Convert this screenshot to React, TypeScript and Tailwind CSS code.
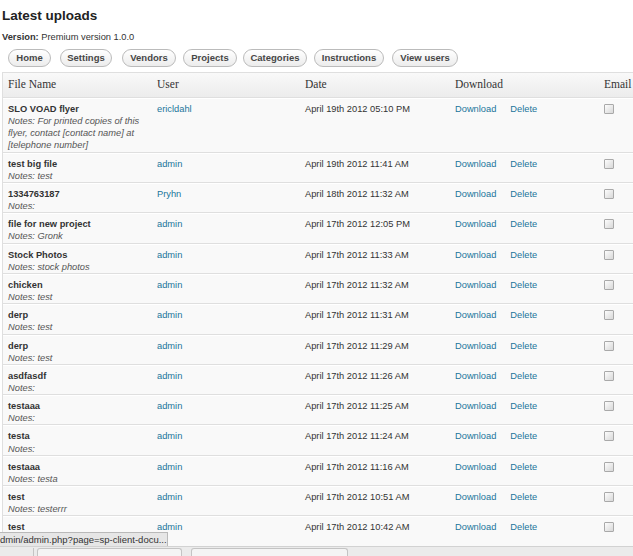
const navButtons = [
  { label: "Home", w: "w-[43px]", ml: "ml-[8px]" },
  { label: "Settings", w: "w-[52px]", ml: "ml-[9px]" },
  { label: "Vendors", w: "w-[54px]", ml: "ml-[10px]" },
  { label: "Projects", w: "w-[54px]", ml: "ml-[7px]" },
  { label: "Categories", w: "w-[64px]", ml: "ml-[6px]" },
  { label: "Instructions", w: "w-[70px]", ml: "ml-[7px]" },
  { label: "View users", w: "w-[66px]", ml: "ml-[8px]" },
]

const uploads = [
  { name: "SLO VOAD flyer", notes: "Notes: For printed copies of this flyer, contact [contact name] at [telephone number]", user: "ericldahl", date: "April 19th 2012 05:10 PM" },
  { name: "test big file", notes: "Notes: test", user: "admin", date: "April 19th 2012 11:41 AM" },
  { name: "1334763187", notes: "Notes:", user: "Pryhn", date: "April 18th 2012 11:32 AM" },
  { name: "file for new project", notes: "Notes: Gronk", user: "admin", date: "April 17th 2012 12:05 PM" },
  { name: "Stock Photos", notes: "Notes: stock photos", user: "admin", date: "April 17th 2012 11:33 AM" },
  { name: "chicken", notes: "Notes: test", user: "admin", date: "April 17th 2012 11:32 AM" },
  { name: "derp", notes: "Notes: test", user: "admin", date: "April 17th 2012 11:31 AM" },
  { name: "derp", notes: "Notes: test", user: "admin", date: "April 17th 2012 11:29 AM" },
  { name: "asdfasdf", notes: "Notes:", user: "admin", date: "April 17th 2012 11:26 AM" },
  { name: "testaaa", notes: "Notes:", user: "admin", date: "April 17th 2012 11:25 AM" },
  { name: "testa", notes: "Notes:", user: "admin", date: "April 17th 2012 11:24 AM" },
  { name: "testaaa", notes: "Notes: testa", user: "admin", date: "April 17th 2012 11:16 AM" },
  { name: "test", notes: "Notes: testerrr", user: "admin", date: "April 17th 2012 10:51 AM" },
  { name: "test", notes: "Notes: test", user: "admin", date: "April 17th 2012 10:42 AM" },
]

const cols = "grid grid-cols-[149px_148px_150px_149px_150px]"

export default function App() {
  return (
    <div className="relative w-[633px] h-[556px] overflow-hidden bg-white text-[#333] font-['Liberation_Sans',Arial,sans-serif]">
      <div className="pl-[2px] pt-[7px]">
        <h2 className="text-[13.5px] font-bold leading-[18px] text-[#222]">Latest uploads</h2>
        <p className="mt-[6px] text-[9.3px] leading-[12px]">
          <b>Version:</b> Premium version 1.0.0
        </p>
      </div>

      <div className="flex mt-[6px]">
        {navButtons.map((b) => (
          <button
            key={b.label}
            className={`${b.w} ${b.ml} h-[18px] rounded-full border border-[#bbb] bg-gradient-to-b from-white to-[#ececec] text-[9.5px] font-bold text-[#464646] leading-[16px] text-center`}
          >
            {b.label}
          </button>
        ))}
      </div>

      <div className="ml-[2px] mt-[5px] w-[750px] border border-[#dfdfdf] bg-[#f9f9f9]">
        <div className={`${cols} h-[25px] border-b border-[#dfdfdf] bg-gradient-to-b from-[#f9f9f9] to-[#ececec] font-['Liberation_Serif',Georgia,serif] text-[11.5px] text-[#333] items-center`}>
          <div className="px-[5px]">File Name</div>
          <div className="px-[5px]">User</div>
          <div className="px-[5px]">Date</div>
          <div className="px-[5px]">Download</div>
          <div className="px-[5px]">Email</div>
        </div>

        {uploads.map((u, i) => (
          <div key={i} className={`${cols} border-b border-[#dfdfdf] border-t border-t-white pt-[4px] text-[9.3px] leading-[12.15px]`}>
            <div className="px-[5px]">
              <div className="font-bold text-[#333]">{u.name}</div>
              <div className="italic text-[#555] pr-[4px]">{u.notes}</div>
            </div>
            <div className="px-[5px] text-[#21759b]">{u.user}</div>
            <div className="px-[5px]">{u.date}</div>
            <div className="px-[5px] flex text-[#21759b]">
              <span>Download</span>
              <span className="ml-[14px]">Delete</span>
            </div>
            <div className="px-[5px]">
              <span className="block mt-[1px] w-[10px] h-[10px] border border-[#a9a9a9] rounded-[1px] bg-gradient-to-br from-[#fdfdfd] to-[#d8d8d8]" />
            </div>
          </div>
        ))}
      </div>

      <div className="absolute left-0 top-[532px] w-[168px] h-[14px] bg-[#e6e6e6] border-t border-r border-[#b9b9b9] text-[9.5px] leading-[13px] text-[#333] whitespace-nowrap overflow-hidden">
        dmin/admin.php?page=sp-client-docu...
      </div>

      <div className="absolute left-0 top-[546px] w-[633px] h-[10px] bg-[#ebebeb] border-t border-[#d2d2d2] flex items-end">
        <div className="ml-[33px] w-px h-[8px] bg-[#c4c4c4]" />
        <div className="ml-[3px] w-[145px] h-[8px] rounded-t-[3px] border border-b-0 border-[#c4c4c4] bg-[#f4f4f4]" />
        <div className="ml-[9px] w-[157px] h-[8px] rounded-t-[3px] border border-b-0 border-[#c4c4c4] bg-[#f4f4f4]" />
      </div>
    </div>
  )
}
